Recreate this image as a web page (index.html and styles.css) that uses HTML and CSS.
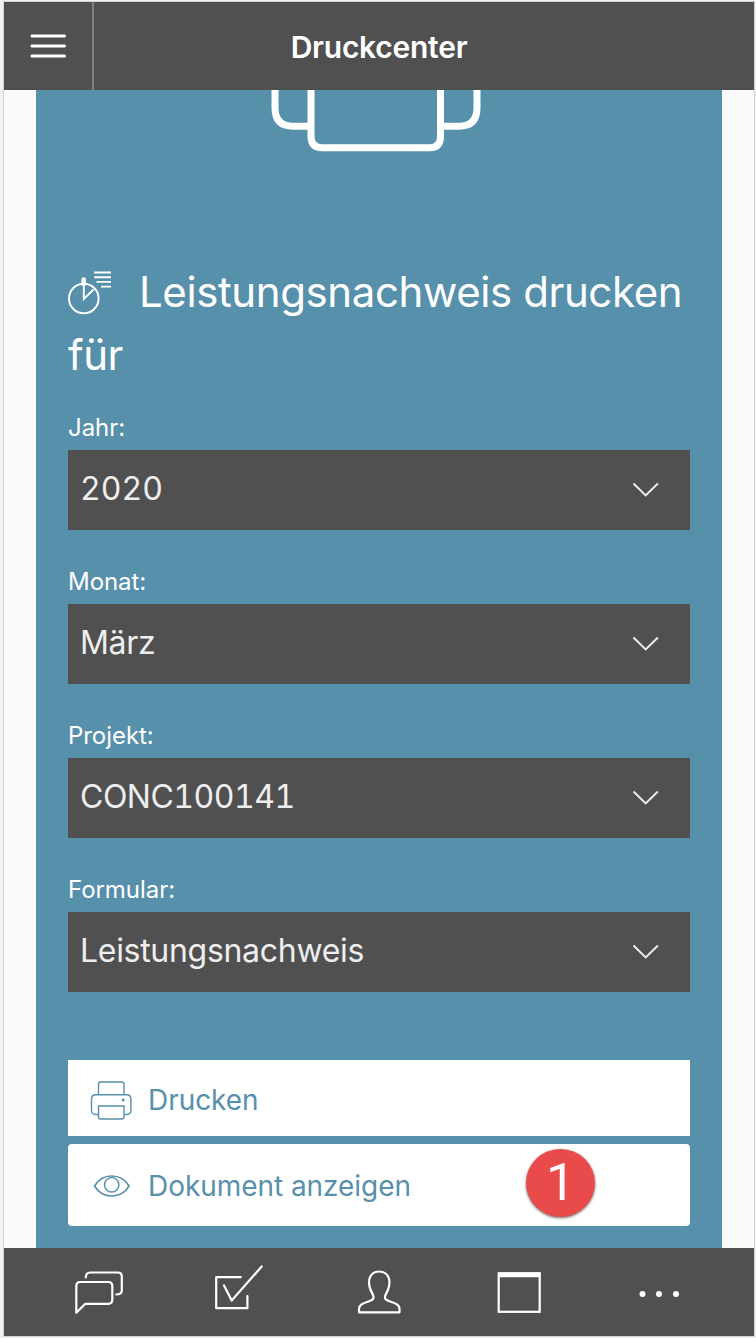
FILE: index.html
```html
<!DOCTYPE html>
<html lang="de">
<head>
<meta charset="utf-8">
<title>Druckcenter</title>
<link rel="stylesheet" href="styles.css">
</head>
<body>
<div class="app">
  <header class="topbar">
    <div class="menu"><svg width="88" height="88" fill="none" stroke="#fff" stroke-width="3" stroke-linecap="round"><path d="M28 34H60.500M28 44H60.500M28 54H60.500"/></svg></div>
    <h1 class="title"><span>Druckcenter</span></h1>
  </header>
  <main class="content">
    <section class="panel">
      <svg class="hero" width="622" height="66" fill="none" stroke="#fff" stroke-width="7"><path d="M207 0V18Q207 36.200 225 36.200H243M409 0V18Q409 36.200 391 36.200H373M243 0V46Q243 57.800 254 57.800H362Q372.500 57.800 372.500 46V0"/></svg>
      <h2 class="heading"><svg class="clock" width="46" height="46" fill="none" stroke="#fff" stroke-width="1.900"><circle cx="15.800" cy="28.500" r="14.800"/><path d="M15.800 13V29L25.500 19.500M26.200 2.500H43M26.200 7.200H43M28.500 11.900H43M33 16.600H43"/><path d="M15.700 9.500V14" stroke-width="4.500" stroke-linecap="round"/></svg><span class="ht">Leistungsnachweis drucken</span><br><span>für</span></h2>
      <div class="field"><label><span class="jahr">Jahr:</span></label><div class="select"><span class="year">2020</span><svg width="28" height="16" fill="none" stroke="#eee" stroke-width="2"><path d="M1.500 1.500L13.700 13.400L25.900 1.500"/></svg></div></div>
      <div class="field"><label><span>Monat:</span></label><div class="select"><span>März</span><svg width="28" height="16" fill="none" stroke="#eee" stroke-width="2"><path d="M1.500 1.500L13.700 13.400L25.900 1.500"/></svg></div></div>
      <div class="field"><label><span>Projekt:</span></label><div class="select"><span class="project">CONC100141</span><svg width="28" height="16" fill="none" stroke="#eee" stroke-width="2"><path d="M1.500 1.500L13.700 13.400L25.900 1.500"/></svg></div></div>
      <div class="field"><label><span>Formular:</span></label><div class="select"><span>Leistungsnachweis</span><svg width="28" height="16" fill="none" stroke="#eee" stroke-width="2"><path d="M1.500 1.500L13.700 13.400L25.900 1.500"/></svg></div></div>
      <div class="actions">
        <div class="action print">
          <svg width="42" height="42" viewBox="-.2 -1 42 42" fill="none" stroke="#5790ab" stroke-width="1.400"><path d="M8.300 14.500V4Q8.300 2 10.300 2H31.500Q33.800 2 33.800 4V14.500M8.300 34.500H5.500Q1.300 34.500 1.300 30V19Q1.300 14.700 5.500 14.700H36.500Q40.700 14.700 40.700 19V30Q40.700 34.500 36.500 34.500H33.800M8.300 26H33.800V37Q33.800 39 31.500 39H10.300Q8.300 39 8.300 37Z"/><circle cx="33" cy="20" r="1.500" fill="#5790ab" stroke="none"/></svg>
          <span>Drucken</span>
        </div>
        <div class="action view">
          <svg width="42" height="42" viewBox="-.5 0 42 42" fill="none" stroke="#5790ab" stroke-width="1.700"><path d="M4 21C8 14.500 14 11 21 11S35 14.500 38.500 21C35 27.500 28 31 21 31S8 27.500 4 21Z"/><circle cx="21.200" cy="19.800" r="7.200" stroke-width="1.400"/></svg>
          <span>Dokument anzeigen</span>
          <b class="badge">1</b>
        </div>
      </div>
    </section>
  </main>
  <nav class="tabbar">
    <svg width="150" height="88" viewBox="4.200 1248 150 88" fill="none" stroke="#fff" stroke-width="2.200" stroke-linecap="round" stroke-linejoin="round"><path d="M76.500 1312.800V1286Q76.500 1282 80.500 1282H108.500Q112.500 1282 112.500 1286V1299.500Q112.500 1303.800 108.500 1303.800H85.500ZM86 1277.500Q86 1272.500 90.500 1272.500H118Q122 1272.500 122 1276.500V1290.500Q122 1294.500 116.500 1294.500"/></svg>
    <svg width="130" height="88" viewBox="154.300 1248 130 88" fill="none" stroke="#fff" stroke-width="2.200" stroke-linecap="round" stroke-linejoin="round"><path d="M241 1277.200H216.500V1308.200H247.700V1296M224.300 1285.500L232 1300.500L262 1266.500"/></svg>
    <svg width="160" height="88" viewBox="284 1248 160 88" fill="none" stroke="#fff" stroke-width="2.200" stroke-linejoin="round"><path d="M359 1312.300V1309C359 1304.500 363.500 1303 369 1301.200C372.500 1300 373.800 1299.200 373.500 1296.500C373.300 1294.500 370.500 1291.500 369.500 1286.500C368.800 1283 369 1280 369.500 1278.500C371 1274 374.500 1271.500 379 1271.500S387.500 1274 389 1278.500C389.500 1280 389.700 1283 389 1286.500C388 1291.500 385.200 1294.500 385 1296.500C384.700 1299.200 386 1300 389.500 1301.200C395 1303 399.500 1304.500 399.500 1309V1312.300Z"/></svg>
    <svg width="150" height="88" viewBox="444 1248 150 88" fill="none" stroke="#fff" stroke-width="2.200"><rect x="498.700" y="1273.500" width="41" height="38.300"/><path d="M498 1274.800H540.500" stroke-width="5"/></svg>
    <svg width="160" height="88" viewBox="594 1248 160 88" fill="#fff"><circle cx="642.500" cy="1294" r="3"/><circle cx="659" cy="1294" r="3"/><circle cx="676" cy="1294" r="3"/></svg>
  </nav>
</div>
</body>
</html>
```
FILE: styles.css
```css
* { box-sizing: border-box; }
body {
  margin: 0;
  padding: 1px 1px 1px 3px;
  background: #f1f1f1;
  font-family: Inter, "Liberation Sans", sans-serif;
}
svg { display: block; flex: none; }
.app {
  width: 752px;
  height: 1336px;
  border: 1px solid #d2d2d2;
  background: #fafafa;
  display: flex;
  flex-direction: column;
}
.topbar {
  height: 88px;
  flex: none;
  display: flex;
  background: #505050;
  color: #fff;
}
.menu { width: 90px; border-right: 2px solid #808080; }
.title {
  flex: 1;
  margin: 0;
  padding-right: 90px;
  text-align: center;
  font-size: 30px;
  font-weight: 600;
  line-height: 90px;
  letter-spacing: -0.25px;
}
.content { flex: 1; padding: 0 32px; }
.panel {
  height: 1158px;
  padding: 0 32px;
  background: #5790ab;
  color: #fff;
}
.heading {
  height: 248px;
  margin: 0;
  padding-top: 104px;
  font-size: 42px;
  font-weight: 400;
  line-height: 63px;
  white-space: nowrap;
  letter-spacing: -0.4px;
}
.clock { display: inline-block; vertical-align: -9px; margin-right: 25px; }
.field { height: 154px; }
.field label {
  display: block;
  height: 46px;
  padding-top: 1px;
  font-size: 24px;
  line-height: 46px;
  letter-spacing: -0.05px;
}
.select {
  height: 80px;
  padding: 0 30px 4px 12px;
  display: flex;
  align-items: center;
  justify-content: space-between;
  background: #505050;
  color: #eee;
  font-size: 32px;
  letter-spacing: -0.3px;
  font-variant-numeric: tabular-nums;
}
.year { letter-spacing: 0; }
.project { letter-spacing: -0.5px; }
.select svg { margin-top: 3px; }
.actions { padding-top: 40px; display: flex; flex-direction: column; gap: 8px; }
.action {
  display: flex;
  align-items: center;
  gap: 16px;
  padding-left: 22px;
  background: #fff;
  color: #5790ab;
  font-size: 28px;
  letter-spacing: -0.05px;
}
.print { height: 76px; padding-top: 4px; }
.view { height: 82px; padding-top: 2px; border-radius: 4px; }
.badge {
  width: 69px;
  height: 68px;
  margin: -6px 95px 0 auto;
  border-radius: 50%;
  background: #e94b4a;
  box-shadow: 0 1px 3px #0009;
  color: #fff;
  font: 52px/68px Roboto, sans-serif;
  text-align: center;
}
.tabbar { height: 88px; flex: none; display: flex; background: #505050; }
```
